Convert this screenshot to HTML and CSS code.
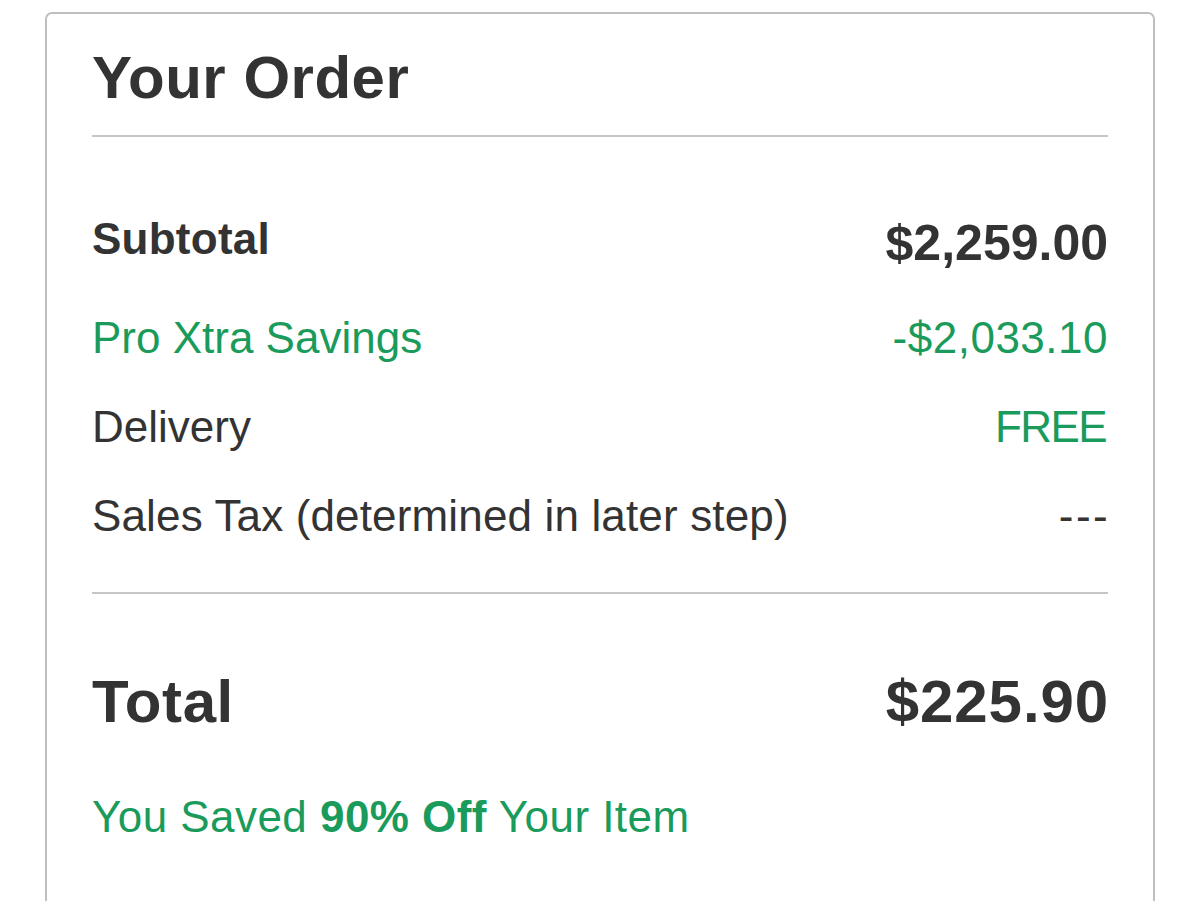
FILE: index.html
```html
<!DOCTYPE html>
<html lang="en">
<head>
<meta charset="utf-8">
<title>Your Order</title>
<link rel="stylesheet" href="styles.css">
</head>
<body>
<section class="card">
  <h1 class="title">Your Order</h1>
  <hr class="divider divider-top">
  <div class="rows">
    <div class="row row-subtotal">
      <span class="label label-bold">Subtotal</span>
      <span class="value value-bold">$2,259.00</span>
    </div>
    <div class="row row-regular green">
      <span class="label">Pro Xtra Savings</span>
      <span class="value value-money">-$2,033.10</span>
    </div>
    <div class="row row-regular">
      <span class="label">Delivery</span>
      <span class="value value-free green">FREE</span>
    </div>
    <div class="row row-regular">
      <span class="label label-tax">Sales Tax (determined in later step)</span>
      <span class="value value-dash">---</span>
    </div>
  </div>
  <hr class="divider divider-bottom">
  <div class="row row-total">
    <span class="label">Total</span>
    <span class="value">$225.90</span>
  </div>
  <p class="saved">You Saved <strong>90% Off</strong> Your Item</p>
</section>
</body>
</html>
```
FILE: styles.css
```css
html, body {
  margin: 0;
  padding: 0;
  background: #ffffff;
  overflow: hidden;
}

body {
  font-family: "Liberation Sans", Arial, Helvetica, sans-serif;
  color: #333333;
}

.card {
  box-sizing: border-box;
  width: 1110px;
  min-height: 1000px;
  margin: 12px 0 0 45px;
  padding: 34px 45px 0 45px;
  border: 2px solid #bfbfbf;
  border-radius: 7px;
  background: #ffffff;
}

.title {
  margin: 0;
  font-size: 60px;
  line-height: 60px;
  font-weight: 700;
  letter-spacing: 0.5px;
  color: #333333;
}

.divider {
  margin: 0;
  height: 2px;
  border: 0;
  background: #c6c6c6;
}

.divider-top {
  margin-top: 27px;
}

.rows {
  display: flex;
  flex-direction: column;
  margin-top: 78px;
}

.row {
  display: flex;
  justify-content: space-between;
}

.row-subtotal {
  align-items: flex-start;
  height: 56px;
}

.row-subtotal .label {
  font-size: 44px;
  line-height: 48px;
  letter-spacing: 0.25px;
}

.row-subtotal .value {
  font-size: 50px;
  line-height: 56px;
}

.label-bold,
.value-bold {
  font-weight: 700;
}

.row-regular {
  font-size: 44px;
  line-height: 52px;
  margin-top: 37px;
}

.row-subtotal + .row-regular {
  margin-top: 41px;
}

.value-money {
  letter-spacing: 0.5px;
}

.value-free {
  letter-spacing: -1.6px;
  margin-right: 2px;
}

.value-dash {
  letter-spacing: 2.4px;
  margin-right: -2px;
}

.label-tax {
  letter-spacing: 0.15px;
}

.green {
  color: #1a9b5b;
}

.divider-bottom {
  margin-top: 50px;
}

.row-total {
  margin-top: 74px;
  font-size: 60px;
  line-height: 68px;
  font-weight: 700;
}

.row-total .label {
  letter-spacing: 0.6px;
}

.row-total .value {
  letter-spacing: 0.9px;
  margin-right: -1px;
}

.saved {
  margin: 55px 0 0 0;
  font-size: 44px;
  line-height: 52px;
  letter-spacing: 0.45px;
  color: #1a9b5b;
}

.saved strong {
  font-weight: 700;
}
```
